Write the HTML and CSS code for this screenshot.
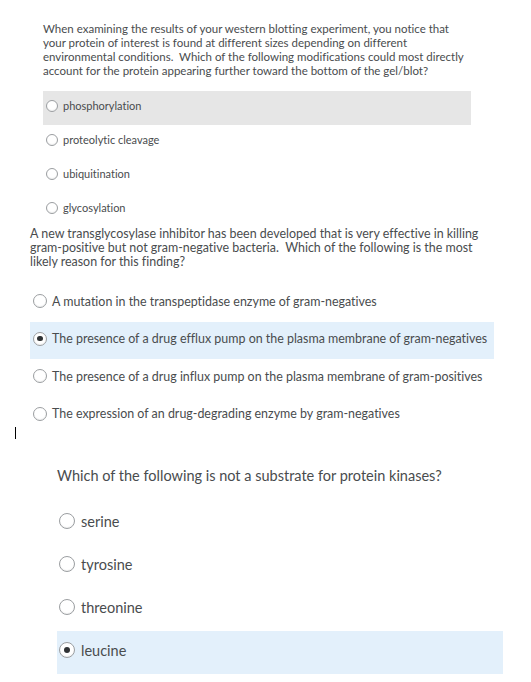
FILE: index.html
```html
<!DOCTYPE html>
<html>
<head>
<meta charset="utf-8">
<link rel="stylesheet" href="styles.css">
</head>
<body>
<div class="page">
  <section class="q q1">
    <p class="stem">When examining the results of your western blotting experiment, you notice that your protein of interest is found at different sizes depending on different environmental conditions.&nbsp; Which of the following modifications could most directly account for the protein appearing further toward the bottom of the gel/blot?</p>
    <div class="opts">
      <div class="opt hover"><span class="radio"></span><span>phosphorylation</span></div>
      <div class="opt"><span class="radio"></span><span>proteolytic cleavage</span></div>
      <div class="opt"><span class="radio"></span><span>ubiquitination</span></div>
      <div class="opt"><span class="radio"></span><span>glycosylation</span></div>
    </div>
  </section>

  <section class="q q2">
    <p class="stem">A new transglycosylase inhibitor has been developed that is very effective in killing gram-positive but not gram-negative bacteria.&nbsp; Which of the following is the most likely reason for this finding?</p>
    <div class="opts">
      <div class="opt"><span class="radio"></span><span>A mutation in the transpeptidase enzyme of gram-negatives</span></div>
      <div class="opt selected"><span class="radio checked"></span><span>The presence of a drug efflux pump on the plasma membrane of gram-negatives</span></div>
      <div class="opt"><span class="radio"></span><span>The presence of a drug influx pump on the plasma membrane of gram-positives</span></div>
      <div class="opt"><span class="radio"></span><span>The expression of an drug-degrading enzyme by gram-negatives</span></div>
    </div>
    <span class="caret"></span>
  </section>

  <section class="q q3">
    <p class="stem">Which of the following is not a substrate for protein kinases?</p>
    <div class="opts">
      <div class="opt"><span class="radio"></span><span>serine</span></div>
      <div class="opt"><span class="radio"></span><span>tyrosine</span></div>
      <div class="opt"><span class="radio"></span><span>threonine</span></div>
      <div class="opt selected"><span class="radio checked"></span><span>leucine</span></div>
    </div>
  </section>
</div>
</body>
</html>
```
FILE: styles.css
```css
html, body {
  margin: 0;
  padding: 0;
  background: #ffffff;
}

body {
  font-family: Lato, "Open Sans", "Liberation Sans", sans-serif;
  color: #494c4e;
  font-variant-ligatures: none;
}

.page {
  width: 531px;
  display: flex;
  flex-direction: column;
}

.q {
  display: flex;
  flex-direction: column;
  position: relative;
}

.stem {
  margin: 0;
}

.opts {
  display: flex;
  flex-direction: column;
}

.opt {
  display: flex;
  align-items: center;
  box-sizing: border-box;
}

.radio {
  flex: none;
  box-sizing: border-box;
  border-radius: 50%;
  border: 1px solid #9b9ea1;
  background: #ffffff;
  box-shadow: inset 0 -1px 1px rgba(0, 0, 0, 0.06);
  display: flex;
  align-items: center;
  justify-content: center;
}

.radio.checked::after {
  content: "";
  width: 44%;
  height: 44%;
  border-radius: 50%;
  background: #303335;
}

.hover {
  background: #e6e6e6;
}

.selected {
  background: #e3f0fb;
}

/* Question 1 */
.q1 {
  margin-left: 43px;
  width: 428px;
  padding-top: 22px;
}

.q1 .stem {
  font-size: 11.5px;
  line-height: 14px;
}

.q1 .opts {
  margin-top: 13px;
}

.q1 .opt {
  height: 34px;
  padding-left: 3px;
  padding-bottom: 5px;
  gap: 5px;
  font-size: 11px;
}

.q1 .radio {
  width: 12px;
  height: 12px;
}

/* Question 2 */
.q2 {
  margin-left: 30px;
  width: 464px;
}

.q2 .stem {
  font-size: 12.45px;
  line-height: 14px;
}

.q2 .opts {
  margin-top: 15px;
}

.q2 .opt {
  height: 37.5px;
  padding-left: 3px;
  padding-bottom: 3px;
  gap: 5px;
  font-size: 12.45px;
}

.q2 .radio {
  width: 14px;
  height: 14px;
}

.caret {
  position: absolute;
  left: -15px;
  bottom: -5px;
  width: 1px;
  height: 12px;
  background: #000000;
}

/* Question 3 */
.q3 {
  margin-left: 57px;
  width: 446px;
  margin-top: 33px;
}

.q3 .stem {
  font-size: 14.5px;
  line-height: 17px;
}

.q3 .opts {
  margin-top: 18px;
}

.q3 .opt {
  height: 43px;
  padding-left: 2px;
  padding-bottom: 5px;
  gap: 6px;
  font-size: 14.5px;
}

.q3 .radio {
  width: 16px;
  height: 16px;
}
```
